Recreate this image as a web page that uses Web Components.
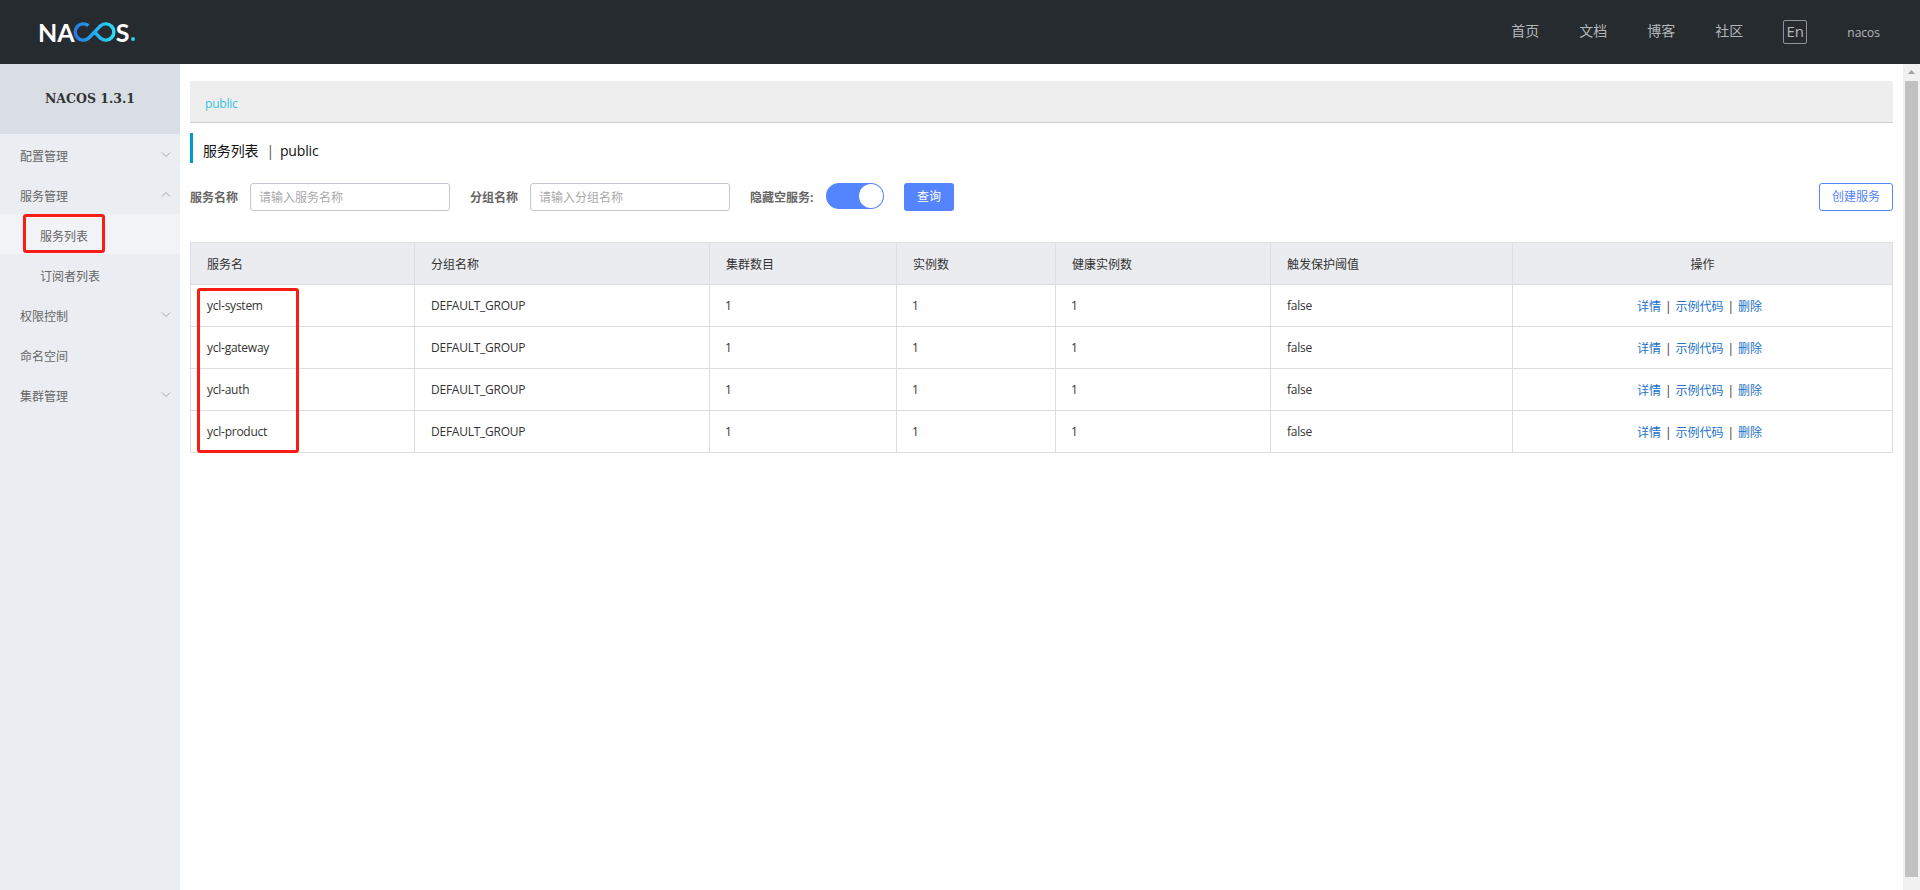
<!DOCTYPE html>
<html lang="zh">
<head>
<meta charset="utf-8">
<title>Nacos</title>
<style>
  html, body { margin: 0; height: 890px; overflow: hidden; background: #fff; }
  body { font-family: "Open Sans", "Noto Sans CJK SC", sans-serif; font-size: 12px; color: #333; }
  .page { display: flex; height: 826px; }
</style>
</head>
<body>
<nacos-header></nacos-header>
<div class="page">
  <nacos-sidebar>
    <nacos-menu-item arrow="down">配置管理</nacos-menu-item>
    <nacos-menu-item arrow="up">服务管理</nacos-menu-item>
    <nacos-menu-item sub active>服务列表<red-box style="left:23px;top:0;width:82px;height:39px"></red-box></nacos-menu-item>
    <nacos-menu-item sub>订阅者列表</nacos-menu-item>
    <nacos-menu-item arrow="down">权限控制</nacos-menu-item>
    <nacos-menu-item>命名空间</nacos-menu-item>
    <nacos-menu-item arrow="down">集群管理</nacos-menu-item>
  </nacos-sidebar>
  <nacos-content>
    <name-space-bar>public</name-space-bar>
    <page-title>服务列表<span>|</span>public</page-title>
    <filter-bar></filter-bar>
    <service-table></service-table>
  </nacos-content>
  <fake-scrollbar></fake-scrollbar>
</div>

<script>
class NacosHeader extends HTMLElement {
    constructor() {
        super();
        this.attachShadow({ mode: 'open' });
        this.shadowRoot.innerHTML = `
          <style>
            :host { display: flex; align-items: center; height: 64px; background: #262b30; color: #b4b7ba; font-size: 14px; }
            .logo { display: flex; align-items: center; margin-left: 38px; color: #fff; font: 700 25px/1 "Lato", sans-serif; }
            .logo svg { margin: 0 -1px 0 -2px; }
            .logo i { width: 4px; height: 4px; background: #2fd0ea; border-radius: 50%; margin: 14px 0 0 2px; }
            nav { margin-left: auto; display: flex; align-items: center; gap: 40px; padding-right: 40px; }
            nav a { line-height: 20px; position: relative; top: -1px; }
            .lang { box-sizing: border-box; width: 24px; height: 24px; border: 1px solid #8f9296; border-radius: 2px; font-size: 15px; line-height: 20px; text-align: center; }
            .user { font-size: 12px; line-height: 20px; position: relative; top: 1px; }
          </style>
          <div class="logo">NA<svg width="44" height="22" viewBox="0 0 46 22" fill="none">
            <defs><linearGradient id="g" x1="0" x2="1" y1="0" y2="0"><stop offset="0" stop-color="#2a78e4"/><stop offset=".55" stop-color="#23b0ee"/><stop offset="1" stop-color="#2fdcf0"/></linearGradient></defs>
            <path d="M16 4.3A8.5 8.5 0 1 0 16 17.7L29 4.3A8.5 8.5 0 1 1 29 17.7L21.5 10" stroke="url(#g)" stroke-width="3.6"/>
          </svg>S<i></i></div>
          <nav>
            <a>首页</a><a>文档</a><a>博客</a><a>社区</a>
            <div class="lang">En</div>
            <div class="user">nacos</div>
          </nav>`;
    }
}
customElements.define('nacos-header', NacosHeader);

class NacosSidebar extends HTMLElement {
    constructor() {
        super();
        this.attachShadow({ mode: 'open' });
        this.shadowRoot.innerHTML = `
          <style>
            :host { display: block; flex: none; width: 180px; background: #eaedf1; }
            .version { height: 70px; background: #d9dee5; color: #333; text-align: center; font: 700 12.5px/70px "DejaVu Serif", serif; }
          </style>
          <div class="version">NACOS 1.3.1</div>
          <slot></slot>`;
    }
}
customElements.define('nacos-sidebar', NacosSidebar);

class NacosMenuItem extends HTMLElement {
    constructor() {
        super();
        this.attachShadow({ mode: 'open' });
        const arrow = this.getAttribute('arrow');
        const d = arrow === 'up' ? 'M1 5.5L5 1.5L9 5.5' : 'M1 1.5L5 5.5L9 1.5';
        this.shadowRoot.innerHTML = `
          <style>
            :host { display: flex; position: relative; align-items: center; height: 40px; padding-left: 20px; padding-right: 9px; color: #666; font-size: 12px; }
            :host([sub]) { padding-left: 40px; }
            :host([active]) { background: #f2f3f7; }
            .label { flex: 1; padding-top: 4px; }
            svg { display: block; }
          </style>
          <span class="label"><slot></slot></span>
          ${arrow ? `<svg width="10" height="7" viewBox="0 0 10 7" fill="none" stroke="#a3a6ab"><path d="${d}"/></svg>` : ''}`;
    }
}
customElements.define('nacos-menu-item', NacosMenuItem);

class RedBox extends HTMLElement {
    constructor() {
        super();
        this.attachShadow({ mode: 'open' });
        this.shadowRoot.innerHTML = `
          <style>
            :host { display: block; position: absolute; box-sizing: border-box; border: 3px solid #fb1d15; border-radius: 3px; pointer-events: none; }
          </style>`;
    }
}
customElements.define('red-box', RedBox);

class NacosContent extends HTMLElement {
    constructor() {
        super();
        this.attachShadow({ mode: 'open' });
        this.shadowRoot.innerHTML = `
          <style>
            :host { display: flex; flex-direction: column; flex: 1; min-width: 0; padding: 17px 10px 0 10px; }
          </style>
          <slot></slot>`;
    }
}
customElements.define('nacos-content', NacosContent);

class NameSpaceBar extends HTMLElement {
    constructor() {
        super();
        this.attachShadow({ mode: 'open' });
        this.shadowRoot.innerHTML = `
          <style>
            :host { display: block; box-sizing: border-box; height: 42px; padding: 13px 15px 0; background: #eee; border-bottom: 1px solid #cfcfcf; color: #33c3e0; font-size: 12px; line-height: 20px; letter-spacing: -.2px; }
          </style>
          <slot></slot>`;
    }
}
customElements.define('name-space-bar', NameSpaceBar);

class PageTitle extends HTMLElement {
    constructor() {
        super();
        this.attachShadow({ mode: 'open' });
        this.shadowRoot.innerHTML = `
          <style>
            :host { display: block; box-sizing: border-box; height: 30px; margin-top: 10px; padding: 3px 0 0 10px; border-left: 3px solid #09c; color: #111; font-size: 14px; line-height: 30px; letter-spacing: -.15px; }
            ::slotted(span) { margin: 0 6px 0 8px; color: #555; }
          </style>
          <slot></slot>`;
    }
}
customElements.define('page-title', PageTitle);

class FilterBar extends HTMLElement {
    constructor() {
        super();
        this.attachShadow({ mode: 'open' });
        this.shadowRoot.innerHTML = `
          <style>
            :host { display: flex; align-items: flex-start; height: 28px; margin-top: 20px; color: #666; font-size: 12px; }
            label { width: 60px; flex: none; font-weight: 700; line-height: 30px; white-space: nowrap; }
            .input { box-sizing: border-box; width: 200px; height: 28px; margin-right: 20px; padding-left: 8px; border: 1px solid #c4c6cf; border-radius: 3px; color: #aaa; line-height: 28px; }
            .switch-label { width: 76px; }
            .switch { box-sizing: border-box; display: flex; justify-content: flex-end; width: 58px; height: 26px; margin-right: 20px; border-radius: 13px; background: #5584ff; padding: 1px; }
            .switch i { width: 24px; height: 24px; border-radius: 50%; background: #fff; }
            .btn { box-sizing: border-box; height: 28px; border-radius: 3px; text-align: center; line-height: 28px; }
            .primary { width: 50px; background: #5584ff; color: #fff; }
            .secondary { width: 74px; margin-left: auto; border: 1px solid #5584ff; color: #5584ff; line-height: 26px; }
          </style>
          <label>服务名称</label><div class="input">请输入服务名称</div>
          <label>分组名称</label><div class="input">请输入分组名称</div>
          <label class="switch-label">隐藏空服务:</label>
          <div class="switch"><i></i></div>
          <div class="btn primary">查询</div>
          <div class="btn secondary">创建服务</div>`;
    }
}
customElements.define('filter-bar', FilterBar);

class ServiceTable extends HTMLElement {
    constructor() {
        super();
        this.attachShadow({ mode: 'open' });
        const names = ['ycl-system', 'ycl-gateway', 'ycl-auth', 'ycl-product'];
        const rows = names.map(name => `
          <tr>
            <td>${name}</td><td>DEFAULT_GROUP</td><td class="n">1</td><td class="n">1</td><td class="n">1</td><td>false</td>
            <td class="ops"><a>详情</a><b>|</b><a>示例代码</a><b>|</b><a>删除</a></td>
          </tr>`).join('');
        this.shadowRoot.innerHTML = `
          <style>
            :host { display: block; position: relative; margin-top: 31px; }
            table { width: 1702px; table-layout: fixed; border-collapse: collapse; font-size: 12px; color: #333; }
            th, td { box-sizing: border-box; height: 42px; padding: 1px 16px 0; border: 1px solid #dcdee3; text-align: left; font-weight: 400; }
            td { padding-top: 0; letter-spacing: -.25px; }
            td.n { padding-left: 15px; }
            th { background: #ebecf0; }
            th:last-child, td.ops { text-align: center; }
            td.ops { padding-right: 22px; letter-spacing: 0; }
            a { color: #2272c9; }
            b { font-weight: 400; margin: 0 4px; color: #333; }
          </style>
          <table>
            <colgroup><col style="width:224px"><col style="width:295px"><col style="width:187px"><col style="width:159px"><col style="width:215px"><col style="width:242px"><col style="width:380px"></colgroup>
            <thead><tr><th>服务名</th><th>分组名称</th><th>集群数目</th><th>实例数</th><th>健康实例数</th><th>触发保护阈值</th><th>操作</th></tr></thead>
            <tbody>${rows}</tbody>
          </table>
          <red-box style="left:7px;top:46px;width:102px;height:165px"></red-box>`;
    }
}
customElements.define('service-table', ServiceTable);

class FakeScrollbar extends HTMLElement {
    constructor() {
        super();
        this.attachShadow({ mode: 'open' });
        this.shadowRoot.innerHTML = `
          <style>
            :host { display: flex; flex-direction: column; align-items: center; flex: none; width: 17px; background: #f1f1f1; }
            svg { display: block; margin-top: 6px; }
            .thumb { width: 13px; height: 796px; margin-top: 7px; background: #c1c1c1; }
          </style>
          <svg width="9" height="4" viewBox="0 0 9 5"><path d="M0 5L4.5 0L9 5Z" fill="#a3a3a3"/></svg>
          <div class="thumb"></div>`;
    }
}
customElements.define('fake-scrollbar', FakeScrollbar);
</script>
</body>
</html>
